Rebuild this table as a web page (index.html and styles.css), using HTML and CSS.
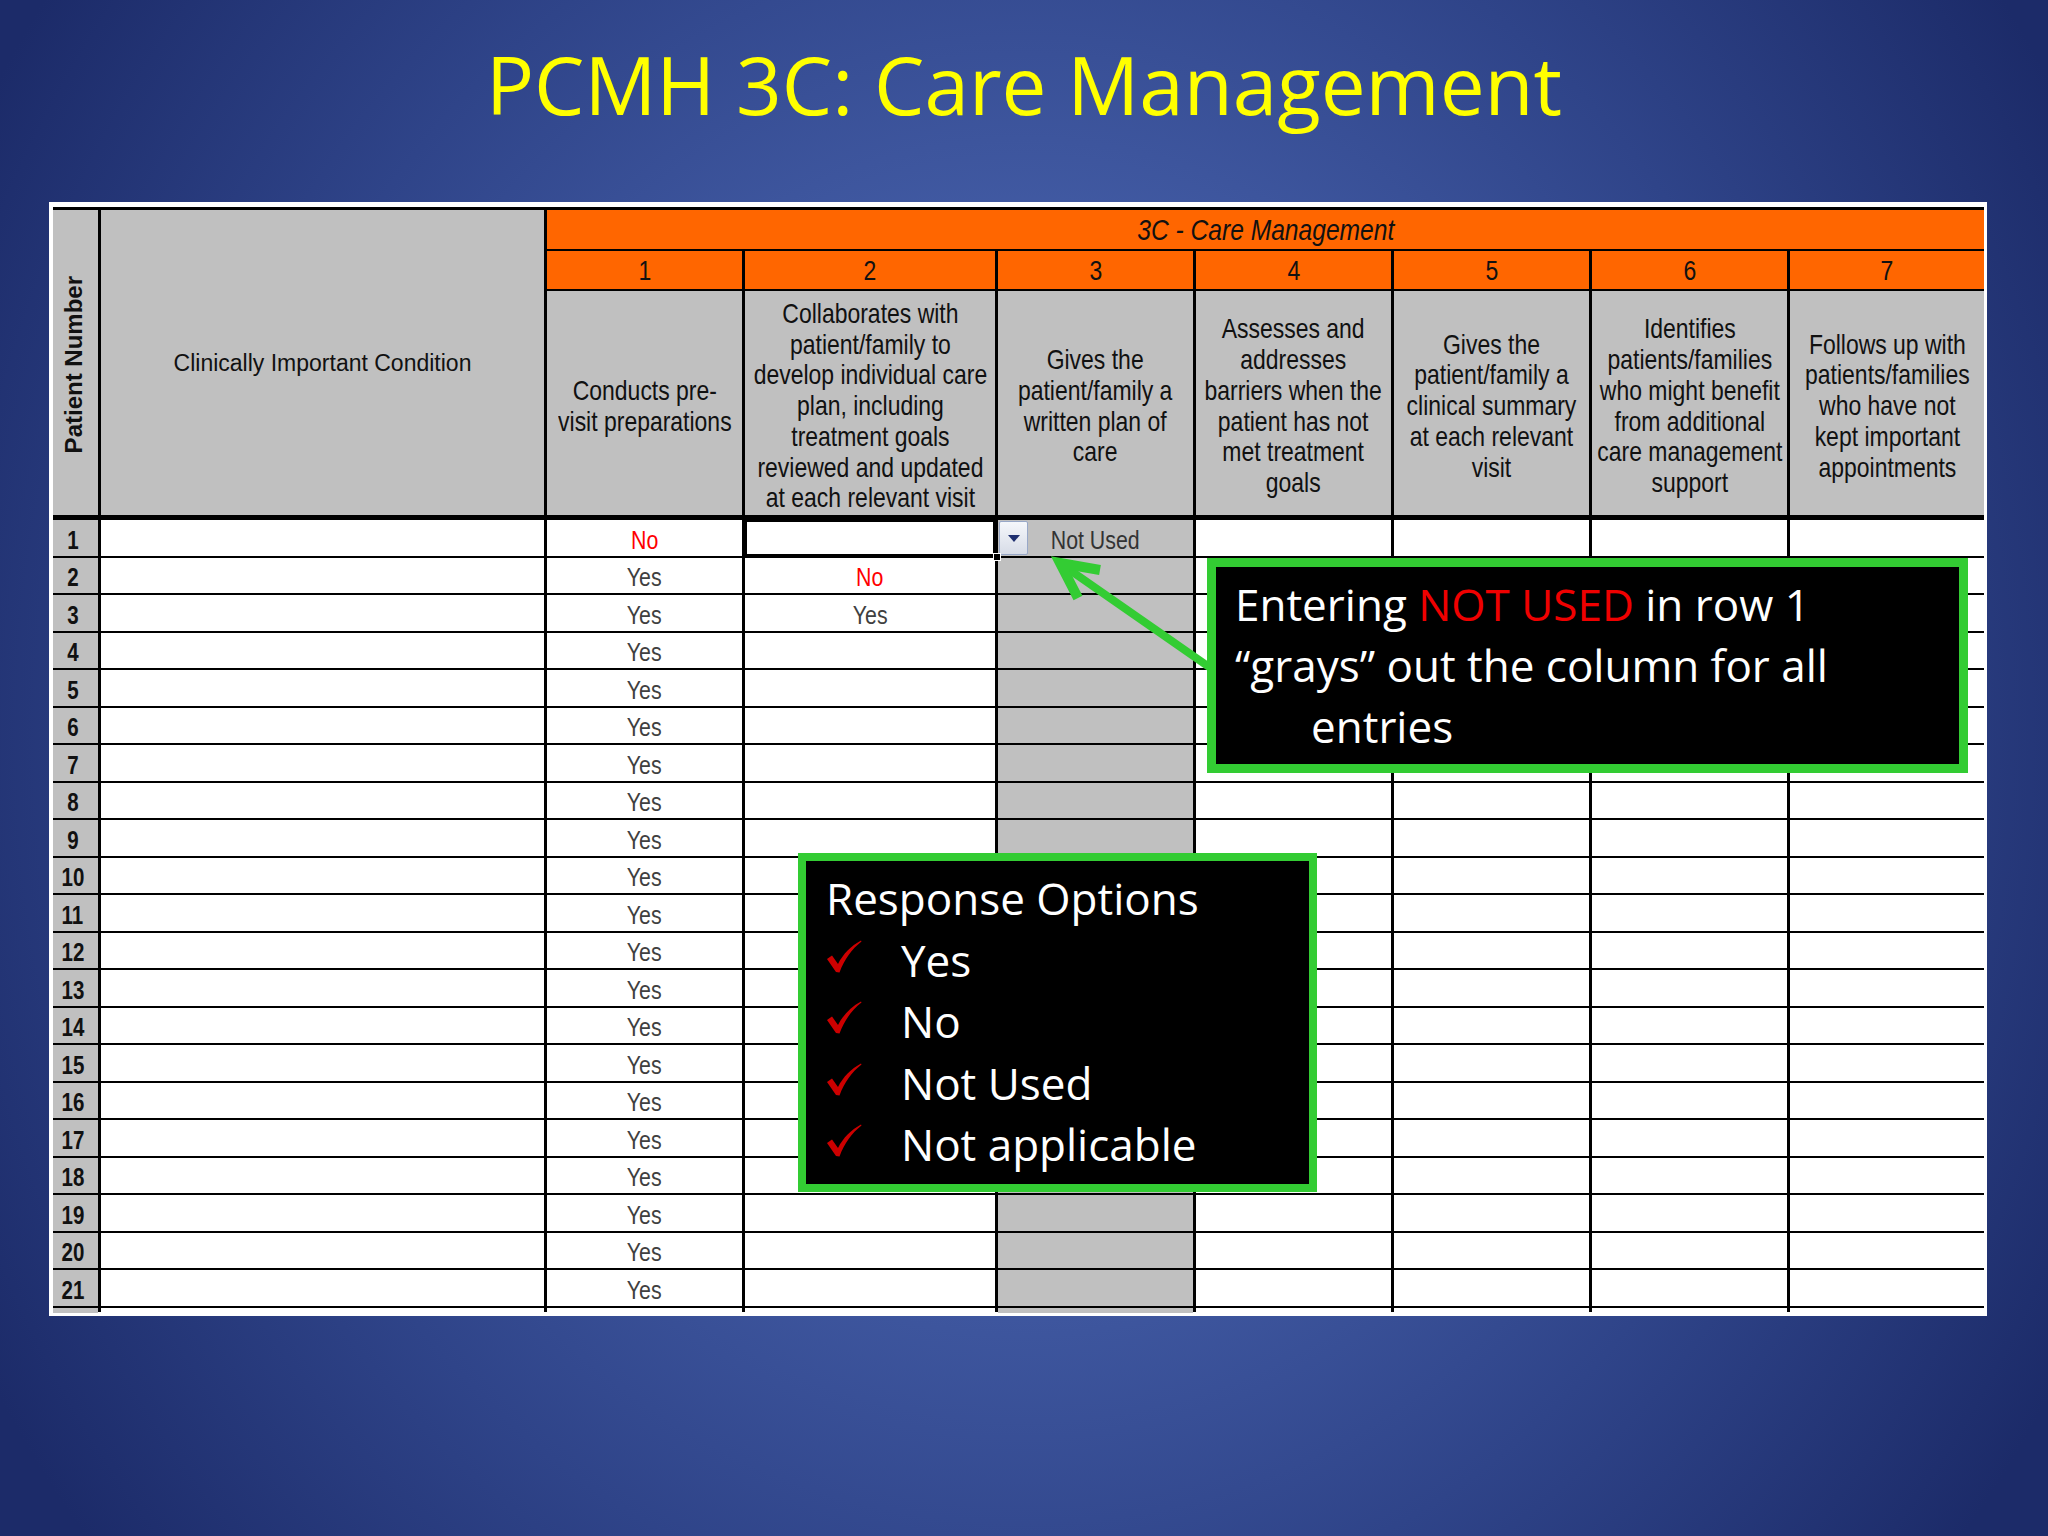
FILE: index.html
```html
<!DOCTYPE html>
<html>
<head>
<meta charset="utf-8">
<title>PCMH 3C: Care Management</title>
<link rel="stylesheet" href="styles.css">
</head>
<body>
<div class="slide">
  <h1 class="title">PCMH 3C: Care Management</h1>

  <div class="frame">
    <div class="sheet">
      <div class="pn"><span>Patient Number</span></div>
      <div class="cond">Clinically Important Condition</div>
      <div class="grp"><span class="t">3C - Care Management</span></div>

      <div class="num"><span class="t">1</span></div><div class="num"><span class="t">2</span></div><div class="num"><span class="t">3</span></div><div class="num"><span class="t">4</span></div><div class="num"><span class="t">5</span></div><div class="num"><span class="t">6</span></div><div class="num"><span class="t">7</span></div>

      <div class="desc"><span class="t">Conducts pre-<br>visit preparations</span></div>
      <div class="desc"><span class="t">Collaborates with<br>patient/family to<br>develop individual care<br>plan, including<br>treatment goals<br>reviewed and updated<br>at each relevant visit</span></div>
      <div class="desc"><span class="t">Gives the<br>patient/family a<br>written plan of<br>care</span></div>
      <div class="desc"><span class="t">Assesses and<br>addresses<br>barriers when the<br>patient has not<br>met treatment<br>goals</span></div>
      <div class="desc"><span class="t">Gives the<br>patient/family a<br>clinical summary<br>at each relevant<br>visit</span></div>
      <div class="desc"><span class="t">Identifies<br>patients/families<br>who might benefit<br>from additional<br>care management<br>support</span></div>
      <div class="desc"><span class="t">Follows up with<br>patients/families<br>who have not<br>kept important<br>appointments</span></div>

      <div class="c rn"><span class="t">1</span></div><div class="c"></div><div class="c no"><span class="t">No</span></div><div class="c sel"></div><div class="c g"><span class="t">Not Used</span><span class="dd"></span></div><div class="c"></div><div class="c"></div><div class="c"></div><div class="c"></div>
      <div class="c rn"><span class="t">2</span></div><div class="c"></div><div class="c"><span class="t">Yes</span></div><div class="c no"><span class="t">No</span></div><div class="c g"></div><div class="c"></div><div class="c"></div><div class="c"></div><div class="c"></div>
      <div class="c rn"><span class="t">3</span></div><div class="c"></div><div class="c"><span class="t">Yes</span></div><div class="c"><span class="t">Yes</span></div><div class="c g"></div><div class="c"></div><div class="c"></div><div class="c"></div><div class="c"></div>
      <div class="c rn"><span class="t">4</span></div><div class="c"></div><div class="c"><span class="t">Yes</span></div><div class="c"></div><div class="c g"></div><div class="c"></div><div class="c"></div><div class="c"></div><div class="c"></div>
      <div class="c rn"><span class="t">5</span></div><div class="c"></div><div class="c"><span class="t">Yes</span></div><div class="c"></div><div class="c g"></div><div class="c"></div><div class="c"></div><div class="c"></div><div class="c"></div>
      <div class="c rn"><span class="t">6</span></div><div class="c"></div><div class="c"><span class="t">Yes</span></div><div class="c"></div><div class="c g"></div><div class="c"></div><div class="c"></div><div class="c"></div><div class="c"></div>
      <div class="c rn"><span class="t">7</span></div><div class="c"></div><div class="c"><span class="t">Yes</span></div><div class="c"></div><div class="c g"></div><div class="c"></div><div class="c"></div><div class="c"></div><div class="c"></div>
      <div class="c rn"><span class="t">8</span></div><div class="c"></div><div class="c"><span class="t">Yes</span></div><div class="c"></div><div class="c g"></div><div class="c"></div><div class="c"></div><div class="c"></div><div class="c"></div>
      <div class="c rn"><span class="t">9</span></div><div class="c"></div><div class="c"><span class="t">Yes</span></div><div class="c"></div><div class="c g"></div><div class="c"></div><div class="c"></div><div class="c"></div><div class="c"></div>
      <div class="c rn"><span class="t">10</span></div><div class="c"></div><div class="c"><span class="t">Yes</span></div><div class="c"></div><div class="c g"></div><div class="c"></div><div class="c"></div><div class="c"></div><div class="c"></div>
      <div class="c rn"><span class="t">11</span></div><div class="c"></div><div class="c"><span class="t">Yes</span></div><div class="c"></div><div class="c g"></div><div class="c"></div><div class="c"></div><div class="c"></div><div class="c"></div>
      <div class="c rn"><span class="t">12</span></div><div class="c"></div><div class="c"><span class="t">Yes</span></div><div class="c"></div><div class="c g"></div><div class="c"></div><div class="c"></div><div class="c"></div><div class="c"></div>
      <div class="c rn"><span class="t">13</span></div><div class="c"></div><div class="c"><span class="t">Yes</span></div><div class="c"></div><div class="c g"></div><div class="c"></div><div class="c"></div><div class="c"></div><div class="c"></div>
      <div class="c rn"><span class="t">14</span></div><div class="c"></div><div class="c"><span class="t">Yes</span></div><div class="c"></div><div class="c g"></div><div class="c"></div><div class="c"></div><div class="c"></div><div class="c"></div>
      <div class="c rn"><span class="t">15</span></div><div class="c"></div><div class="c"><span class="t">Yes</span></div><div class="c"></div><div class="c g"></div><div class="c"></div><div class="c"></div><div class="c"></div><div class="c"></div>
      <div class="c rn"><span class="t">16</span></div><div class="c"></div><div class="c"><span class="t">Yes</span></div><div class="c"></div><div class="c g"></div><div class="c"></div><div class="c"></div><div class="c"></div><div class="c"></div>
      <div class="c rn"><span class="t">17</span></div><div class="c"></div><div class="c"><span class="t">Yes</span></div><div class="c"></div><div class="c g"></div><div class="c"></div><div class="c"></div><div class="c"></div><div class="c"></div>
      <div class="c rn"><span class="t">18</span></div><div class="c"></div><div class="c"><span class="t">Yes</span></div><div class="c"></div><div class="c g"></div><div class="c"></div><div class="c"></div><div class="c"></div><div class="c"></div>
      <div class="c rn"><span class="t">19</span></div><div class="c"></div><div class="c"><span class="t">Yes</span></div><div class="c"></div><div class="c g"></div><div class="c"></div><div class="c"></div><div class="c"></div><div class="c"></div>
      <div class="c rn"><span class="t">20</span></div><div class="c"></div><div class="c"><span class="t">Yes</span></div><div class="c"></div><div class="c g"></div><div class="c"></div><div class="c"></div><div class="c"></div><div class="c"></div>
      <div class="c rn"><span class="t">21</span></div><div class="c"></div><div class="c"><span class="t">Yes</span></div><div class="c"></div><div class="c g"></div><div class="c"></div><div class="c"></div><div class="c"></div><div class="c"></div>

      <div class="c g"></div><div class="c"></div><div class="c"></div><div class="c"></div><div class="c g"></div><div class="c"></div><div class="c"></div><div class="c"></div><div class="c"></div>
    </div>
  </div>

  <svg class="arrow" width="2048" height="1536" viewBox="0 0 2048 1536">
    <line x1="1212" y1="669" x2="1064" y2="566" stroke="#33cc33" stroke-width="8"/>
    <polyline points="1100,570 1060,563 1078,598" fill="none" stroke="#33cc33" stroke-width="10" stroke-linejoin="miter"/>
  </svg>

  <div class="callout co1">
    <div class="line">Entering <span class="red">NOT USED</span> in row 1</div>
    <div class="line">“grays” out the column for all</div>
    <div class="line indent">entries</div>
  </div>

  <div class="callout co2">
    <div class="line">Response Options</div>
    <div class="opt"><svg class="chk" width="36" height="33" viewBox="0 0 36 33"><path d="M1 19 L6 15.5 L12 24 C17 14 25 6 35 0.5 L35.5 1.5 C26 9 18.5 19 13.5 32.5 L10 32 Z" fill="#cc0000"/></svg><span>Yes</span></div>
    <div class="opt"><svg class="chk" width="36" height="33" viewBox="0 0 36 33"><path d="M1 19 L6 15.5 L12 24 C17 14 25 6 35 0.5 L35.5 1.5 C26 9 18.5 19 13.5 32.5 L10 32 Z" fill="#cc0000"/></svg><span>No</span></div>
    <div class="opt"><svg class="chk" width="36" height="33" viewBox="0 0 36 33"><path d="M1 19 L6 15.5 L12 24 C17 14 25 6 35 0.5 L35.5 1.5 C26 9 18.5 19 13.5 32.5 L10 32 Z" fill="#cc0000"/></svg><span>Not Used</span></div>
    <div class="opt"><svg class="chk" width="36" height="33" viewBox="0 0 36 33"><path d="M1 19 L6 15.5 L12 24 C17 14 25 6 35 0.5 L35.5 1.5 C26 9 18.5 19 13.5 32.5 L10 32 Z" fill="#cc0000"/></svg><span>Not applicable</span></div>
  </div>
</div>
</body>
</html>
```

FILE: styles.css
```css
html, body {
  margin: 0;
  padding: 0;
}

body {
  width: 2048px;
  height: 1536px;
  overflow: hidden;
  background: radial-gradient(ellipse 58% 85% at 50% 48%, #4a63ab 0%, #425ba4 38%, #2f4489 68%, #1c2b69 100%);
  font-family: "Open Sans", sans-serif;
}

.slide {
  position: relative;
  width: 2048px;
  height: 1536px;
}

.title {
  margin: 0;
  padding-top: 44px;
  height: 80px;
  line-height: 80px;
  font-size: 80px;
  font-weight: 400;
  color: #ffff00;
  text-align: center;
  font-family: "Open Sans", sans-serif;
}

/* spreadsheet */
.frame {
  margin: 78px 0 0 49px;
  width: 1938px;
  box-sizing: border-box;
  background: #ffffff;
  padding: 5px 3px 4px 4px;
}

.sheet {
  display: grid;
  grid-template-columns: 45px 443px 195px 250px 195px 195px 195px 195px 194px;
  grid-template-rows: 39px 38px 227px repeat(21, 35.5px) 4px;
  gap: 2px 3px;
  background: #000000;
  padding-top: 3px;
  font-family: "Liberation Sans", Arial, sans-serif;
  color: #111111;
}

/* condensed text, Arial Narrow proportions */
.t {
  display: inline-block;
  transform: scaleX(0.82);
  white-space: nowrap;
}

.pn {
  grid-row: 1 / 4;
  grid-column: 1;
  background: #c0c0c0;
  border-bottom: 3px solid #000;
  display: flex;
  align-items: center;
  justify-content: center;
  padding-right: 4px;
  padding-top: 4px;
}

.pn span {
  writing-mode: vertical-rl;
  transform: rotate(180deg);
  font-weight: 700;
  font-size: 24px;
  white-space: nowrap;
}

.cond {
  grid-row: 1 / 4;
  grid-column: 2;
  background: #c0c0c0;
  border-bottom: 3px solid #000;
  display: flex;
  align-items: center;
  justify-content: center;
  font-size: 23px;
  padding-top: 2px;
}

.grp {
  grid-row: 1;
  grid-column: 3 / 10;
  background: #ff6600;
  display: flex;
  align-items: center;
  justify-content: center;
  font-style: italic;
  font-size: 30px;
}

.num {
  background: #ff6600;
  display: flex;
  align-items: center;
  justify-content: center;
  font-size: 28px;
  padding-top: 1px;
}

.desc {
  background: #c0c0c0;
  border-bottom: 3px solid #000;
  display: flex;
  align-items: center;
  justify-content: center;
  text-align: center;
  font-size: 28px;
  line-height: 30.8px;
  padding-top: 7px;
}

.c {
  position: relative;
  background: #ffffff;
  display: flex;
  align-items: center;
  justify-content: center;
  font-size: 26px;
  color: #404040;
  padding-top: 5px;
}

.c.g {
  background: #c0c0c0;
  color: #333333;
}

.c.rn {
  background: #c0c0c0;
  font-weight: 700;
  font-size: 25px;
  color: #111111;
  padding-right: 6px;
}

.c.no {
  color: #ff0000;
}

.c.sel {
  box-shadow: inset 0 0 0 2px #000;
}

.c.sel::after {
  content: "";
  position: absolute;
  right: -6px;
  bottom: -5px;
  width: 6px;
  height: 6px;
  background: #000;
  border: 1px solid #fff;
  z-index: 2;
}

.dd {
  position: absolute;
  left: 1px;
  top: 1px;
  width: 29px;
  height: 34px;
  box-sizing: border-box;
  border: 1px solid #98a8c8;
  border-radius: 2px;
  background: linear-gradient(#f5f7fb, #d7dce7);
  display: flex;
  align-items: center;
  justify-content: center;
}

.dd::after {
  content: "";
  width: 0;
  height: 0;
  border-left: 6px solid transparent;
  border-right: 6px solid transparent;
  border-top: 7px solid #1f2f70;
}

/* overlays */
.arrow {
  position: absolute;
  left: 0;
  top: 0;
  pointer-events: none;
}

.callout {
  position: absolute;
  box-sizing: border-box;
  background: #000000;
  border: 9px solid #33cc33;
  color: #ffffff;
  font-family: "Open Sans", sans-serif;
  font-size: 44px;
  line-height: 61px;
  white-space: nowrap;
}

.co1 {
  left: 1207px;
  top: 558px;
  width: 761px;
  height: 215px;
  padding: 7px 0 0 19px;
}

.co1 .indent {
  padding-left: 76px;
}

.red {
  color: #f00000;
}

.co2 {
  left: 798px;
  top: 853px;
  width: 519px;
  height: 339px;
  border-width: 8px;
  padding: 7px 0 0 20px;
  line-height: 61.5px;
}

.opt {
  display: flex;
  align-items: flex-start;
}

.chk {
  display: block;
  flex: none;
  margin-top: 10px;
  margin-right: 39px;
}
```
